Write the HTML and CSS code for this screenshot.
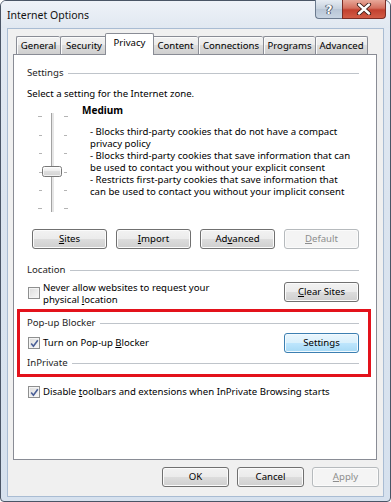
FILE: index.html
```html
<!DOCTYPE html>
<html>
<head>
<meta charset="utf-8">
<link rel="stylesheet" href="styles.css">
</head>
<body>
<div class="window">
  <div class="titlebar">
    <span class="title">Internet Options</span>
    <div class="caption">
      <div class="cbtn help"><span>?</span></div>
      <div class="cbtn close">
        <svg width="16" height="12" viewBox="0 0 16 12"><path d="M3 1.5 L13 10.5 M13 1.5 L3 10.5" stroke="#3a1a14" stroke-width="4.2" stroke-linecap="round"/><path d="M3 1.5 L13 10.5 M13 1.5 L3 10.5" stroke="#ffffff" stroke-width="2.4" stroke-linecap="round"/></svg>
      </div>
    </div>
  </div>
  <div class="client">
    <div class="tabs">
      <div class="tab t-general">General</div>
      <div class="tab t-security">Security</div>
      <div class="tab t-privacy active">Privacy</div>
      <div class="tab t-content">Content</div>
      <div class="tab t-connections">Connections</div>
      <div class="tab t-programs">Programs</div>
      <div class="tab t-advanced">Advanced</div>
    </div>
    <div class="panel">
      <div class="group-head"><span>Settings</span><i></i></div>
      <div class="select-line">Select a setting for the Internet zone.</div>
      <div class="slider-block">
        <svg class="slider" width="55" height="112" viewBox="0 0 55 112">
          <defs>
            <linearGradient id="thumb" x1="0" y1="0" x2="0" y2="1">
              <stop offset="0" stop-color="#fbfbfb"/>
              <stop offset="0.5" stop-color="#ececec"/>
              <stop offset="0.5" stop-color="#dedede"/>
              <stop offset="1" stop-color="#d2d2d2"/>
            </linearGradient>
          </defs>
          <rect x="24" y="9" width="1" height="99" fill="#a3a3a3"/>
          <rect x="25" y="9" width="2" height="99" fill="#e6e6e6"/>
          <g fill="#b4b4b4">
            <rect x="11" y="12" width="4" height="1"/><rect x="37" y="12" width="4" height="1"/>
            <rect x="12" y="31" width="3" height="1"/><rect x="37" y="31" width="3" height="1"/>
            <rect x="12" y="49" width="3" height="1"/><rect x="37" y="49" width="3" height="1"/>
            <rect x="12" y="68" width="3" height="1"/><rect x="37" y="68" width="3" height="1"/>
            <rect x="12" y="86" width="3" height="1"/><rect x="37" y="86" width="3" height="1"/>
            <rect x="11" y="104" width="4" height="1"/><rect x="37" y="104" width="4" height="1"/>
          </g>
          <rect x="15.5" y="62.5" width="19" height="10" rx="2" fill="url(#thumb)" stroke="#777777"/>
          <rect x="16.5" y="63.5" width="17" height="8" rx="1" fill="none" stroke="#ffffff" stroke-opacity="0.7"/>
        </svg>
        <div class="desc">
          <div class="level">Medium</div>
          <div class="desc-text">- Blocks third-party cookies that do not have a compact<br>privacy policy<br>- Blocks third-party cookies that save information that can<br>be used to contact you without your explicit consent<br>- Restricts first-party cookies that save information that<br>can be used to contact you without your implicit consent</div>
        </div>
      </div>
      <div class="btn-row">
        <div class="btn"><u>S</u>ites</div>
        <div class="btn"><u>I</u>mport</div>
        <div class="btn">Ad<u>v</u>anced</div>
        <div class="btn disabled"><u>D</u>efault</div>
      </div>
      <div class="group-head loc"><span>Location</span><i></i></div>
      <div class="loc-row">
        <div class="check-line">
          <span class="cb"></span>
          <span class="lbl two">Never allow websites to request your<br>physical <u>l</u>ocation</span>
        </div>
        <div class="btn"><u>C</u>lear Sites</div>
      </div>
      <div class="highlight">
        <div class="group-head"><span>Pop-up Blocker</span><i></i></div>
        <div class="popup-row">
          <div class="check-line">
            <span class="cb checked"><svg width="9" height="9" viewBox="0 0 9 9"><path d="M1.2 4.6 L3.4 7.2 L7.8 1.2" fill="none" stroke="#4a5f97" stroke-width="1.6"/></svg></span>
            <span class="lbl">Turn on Pop-up <u>B</u>locker</span>
          </div>
          <div class="btn focus">Settings</div>
        </div>
        <div class="group-head inpriv"><span>InPrivate</span><i></i></div>
      </div>
      <div class="check-line disable-row">
        <span class="cb checked"><svg width="9" height="9" viewBox="0 0 9 9"><path d="M1.2 4.6 L3.4 7.2 L7.8 1.2" fill="none" stroke="#4a5f97" stroke-width="1.6"/></svg></span>
        <span class="lbl">Disable <u>t</u>oolbars and extensions when InPrivate Browsing starts</span>
      </div>
    </div>
    <div class="footer">
      <div class="btn fbtn">OK</div>
      <div class="btn fbtn">Cancel</div>
      <div class="btn fbtn disabled"><u>A</u>pply</div>
    </div>
  </div>
</div>
</body>
</html>
```

FILE: styles.css
```css
* { box-sizing: border-box; }
html, body { margin: 0; padding: 0; background: #ffffff; }
body {
  font-family: "Noto Sans", "Open Sans", sans-serif;
  font-size: 9.6px;
  color: #000;
  width: 391px;
  height: 502px;
  overflow: hidden;
}
.window {
  width: 391px;
  height: 502px;
  border: 1px solid #4a5566;
  border-radius: 6px 6px 4px 4px;
  background: linear-gradient(#e3eaf3, #dbe4ef 40%, #d6e1ee);
  display: flex;
  flex-direction: column;
}
.titlebar {
  height: 27px;
  display: flex;
  justify-content: space-between;
  align-items: flex-start;
  padding-left: 6px;
  background: linear-gradient(#eef2f8, #e1e8f1);
  border-radius: 5px 5px 0 0;
}
.title {
  font-size: 10.5px;
  line-height: 12px;
  margin-top: 8px;
  color: #111;
}
.caption {
  display: flex;
  margin-right: 4px;
  margin-top: -1px;
}
.cbtn {
  height: 19px;
  display: flex;
  align-items: center;
  justify-content: center;
  border: 1px solid #6b7a8e;
  border-top: none;
}
.help {
  width: 27px;
  border-right: none;
  border-radius: 0 0 0 4px;
  background: linear-gradient(#e6ecf3, #c6d1de 50%, #b8c5d5 50%, #c8d4e2);
}
.help span {
  font-family: "DejaVu Sans", sans-serif;
  font-weight: bold;
  font-size: 12px;
  color: #ffffff;
  text-shadow: 0 0 1px #3b4556, 0 0 1px #3b4556, 1px 0 0 #556070, -1px 0 0 #556070;
  margin-top: 1px;
}
.close {
  width: 44px;
  border-radius: 0 0 4px 0;
  border-color: #7a2d25;
  background: linear-gradient(#e8a899, #d4705f 45%, #c2412f 55%, #d25c46);
}
.client {
  flex: 1;
  margin: 0 6px 4px 6px;
  border: 1px solid #a9bcd3;
  background: #f0f0f0;
  display: flex;
  flex-direction: column;
}
.tabs {
  display: flex;
  align-items: flex-end;
  height: 21px;
  margin-top: 4px;
  padding-left: 8px;
  position: relative;
  z-index: 2;
}
.tab {
  height: 18px;
  border: 1px solid #898c95;
  border-bottom: none;
  border-right: none;
  border-radius: 2px 2px 0 0;
  background: linear-gradient(#f2f2f2, #ebebeb 50%, #dddddd 50%, #cfcfcf);
  box-shadow: inset 1px 1px 0 #fbfbfb;
  display: flex;
  align-items: center;
  justify-content: center;
  padding-bottom: 1px;
  white-space: nowrap;
}
.t-advanced { border-right: 1px solid #898c95; }
.t-general { width: 44px; }
.t-security { width: 47px; }
.t-privacy { width: 45px; }
.t-content { width: 46px; }
.t-connections { width: 65px; }
.t-programs { width: 52px; }
.t-advanced { width: 53px; }
.tab.active {
  width: 49px;
  margin: 0 -2px -1px -2px;
  height: 22px;
  background: #ffffff;
  box-shadow: none;
  border-right: 1px solid #898c95;
  padding-bottom: 4px;
  position: relative;
  z-index: 3;
}
.tab.active + .tab { border-left: none; padding-left: 1px; }
.panel {
  margin-left: 5px;
  width: 364px;
  height: 406px;
  border: 1px solid #898c95;
  background: #ffffff;
  padding: 11px 17px 0 13px;
  position: relative;
  z-index: 1;
}
.group-head {
  display: flex;
  align-items: center;
  height: 13px;
  line-height: 13px;
  color: #1e1e1e;
}
.group-head i {
  flex: 1;
  height: 1px;
  background: #bfc4ca;
  margin-left: 4px;
  margin-top: 1px;
}
.select-line {
  margin-top: 8px;
  height: 13px;
  line-height: 13px;
}
.slider-block {
  display: flex;
  margin-top: 4px;
  height: 112px;
}
.slider { flex: none; }
.level {
  font-weight: bold;
  font-size: 10px;
  height: 13px;
  line-height: 13px;
}
.desc-text {
  margin-top: 9px;
  margin-left: 8px;
  line-height: 12px;
  white-space: nowrap;
}
.btn-row {
  display: flex;
  gap: 9px;
  margin-top: 13px;
  padding-left: 5px;
}
.btn {
  width: 75px;
  height: 20px;
  border: 1px solid #707070;
  border-radius: 3px;
  background: linear-gradient(#f2f2f2, #ebebeb 50%, #dddddd 50%, #cfcfcf);
  box-shadow: inset 0 0 0 1px #fbfbfb;
  display: flex;
  align-items: center;
  justify-content: center;
  padding-bottom: 1px;
  color: #000;
  white-space: nowrap;
}
.btn.disabled {
  border-color: #b6babd;
  background: #f4f4f4;
  box-shadow: inset 0 0 0 1px #fbfbfb;
  color: #8d8d8d;
}
.btn.focus {
  border-color: #3c7fb1;
  background: linear-gradient(#eaf6fd, #d9f0fc 50%, #bee6fd 50%, #a7d9f5);
  box-shadow: inset 0 0 0 1px #f2faff;
}
.group-head.loc { margin-top: 14px; }
.loc-row {
  display: flex;
  justify-content: space-between;
  align-items: flex-start;
  margin-top: 6px;
}
.check-line {
  display: flex;
  align-items: flex-start;
}
.cb {
  flex: none;
  width: 12px;
  height: 12px;
  border: 1px solid #8e8f8f;
  background: linear-gradient(135deg, #dcdcdc, #f8f8f8);
  box-shadow: inset 0 0 0 1px #f4f4f4;
  margin-left: 1px;
  margin-top: 5px;
  display: flex;
  align-items: center;
  justify-content: center;
}
.lbl {
  margin-left: 3px;
  line-height: 12px;
  white-space: nowrap;
}
.highlight {
  margin: 3px -12px 0 -10px;
  border: 3px solid #e3121b;
  padding: 4px 9px 5px 7px;
}
.popup-row {
  display: flex;
  justify-content: space-between;
  align-items: center;
  margin-top: 4px;
  height: 20px;
}
.popup-row .check-line { align-items: center; }
.popup-row .cb { margin-top: 0; }
.group-head.inpriv { margin-top: 3px; }
.disable-row {
  margin-top: 9px;
  align-items: center;
}
.disable-row .cb { margin-top: 0; }
.footer {
  display: flex;
  justify-content: flex-end;
  gap: 8px;
  margin-top: 7px;
  padding-right: 4px;
}
.fbtn { width: 67px; }
```
